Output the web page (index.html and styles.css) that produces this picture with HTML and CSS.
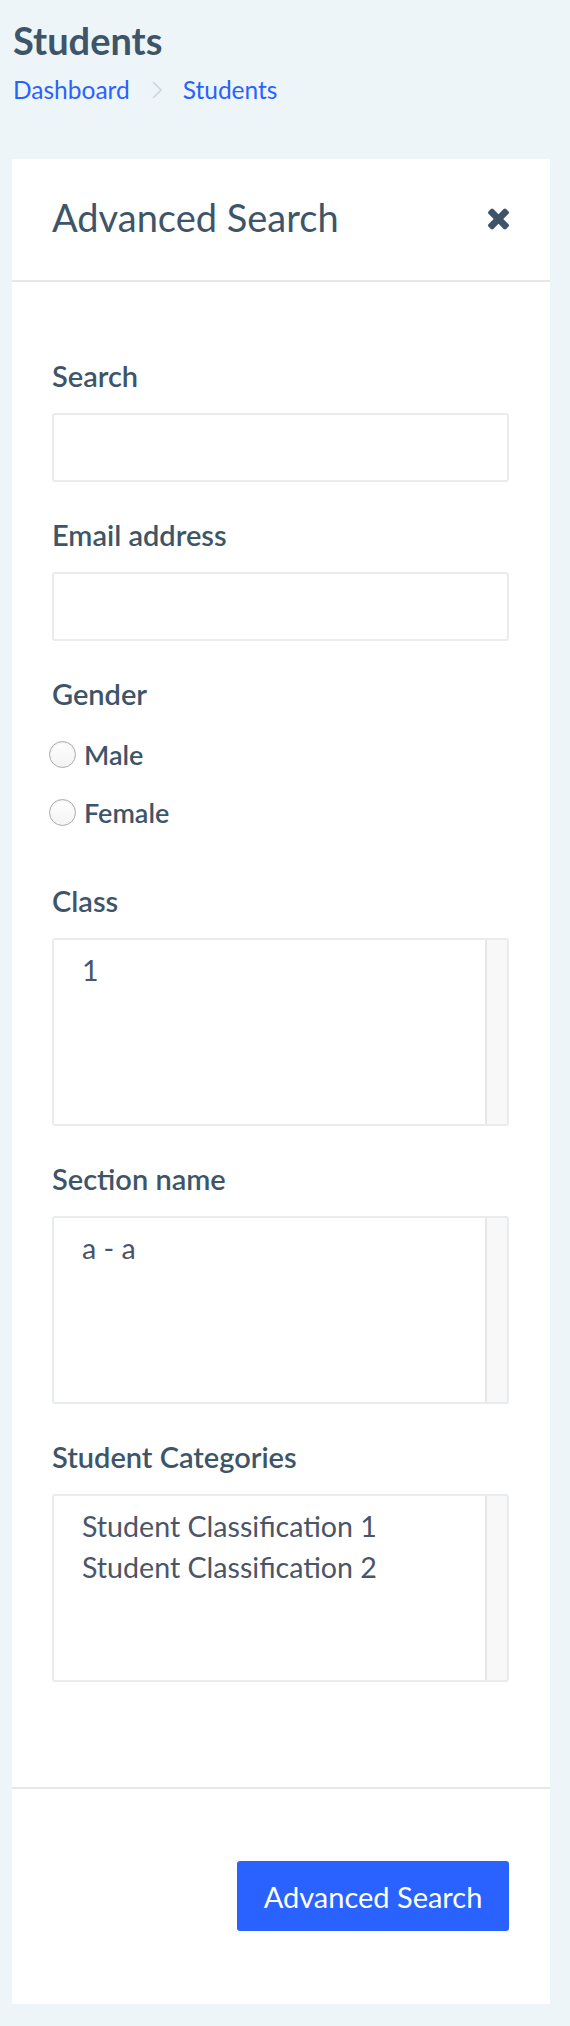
FILE: index.html
```html
<!DOCTYPE html>
<html lang="en">
<head>
<meta charset="utf-8">
<title>Students</title>
<link rel="stylesheet" href="styles.css">
</head>
<body>
<header class="page-header">
  <h1 class="page-title">Students</h1>
  <nav class="breadcrumb">
    <a href="#" class="crumb">Dashboard</a>
    <svg class="crumb-sep" width="12" height="20" viewBox="0 0 12 20"><polyline points="2,2 10,10 2,18" fill="none" stroke="#cfd4d8" stroke-width="1.6"/></svg>
    <a href="#" class="crumb">Students</a>
  </nav>
</header>

<section class="card">
  <div class="card-header">
    <h2 class="card-title">Advanced Search</h2>
    <button class="close" type="button" aria-label="Close">
      <svg width="21" height="22" viewBox="110 366 1188 1188"><path fill="#3e5569" d="M1298 1322q0 40-28 68l-136 136q-28 28-68 28t-68-28l-294-294-294 294q-28 28-68 28t-68-28l-136-136q-28-28-28-68t28-68l294-294-294-294q-28-28-28-68t28-68l136-136q28-28 68-28t68 28l294 294 294-294q28-28 68-28t68 28l136 136q28 28 28 68t-28 68l-294 294 294 294q28 28 28 68z"/></svg>
    </button>
  </div>

  <form class="card-body">
    <div class="group">
      <label class="label" for="q">Search</label>
      <input class="control" id="q" type="text">
    </div>
    <div class="group">
      <label class="label" for="email">Email address</label>
      <input class="control" id="email" type="email">
    </div>
    <div class="group group-radio">
      <div class="label">Gender</div>
      <label class="radio-row"><input type="radio" name="gender" class="radio"><span>Male</span></label>
      <label class="radio-row"><input type="radio" name="gender" class="radio"><span>Female</span></label>
    </div>
    <div class="group">
      <div class="label">Class</div>
      <div class="listbox" role="listbox">
        <div class="options"><div class="option">1</div></div>
        <div class="track"></div>
      </div>
    </div>
    <div class="group">
      <div class="label">Section name</div>
      <div class="listbox" role="listbox">
        <div class="options"><div class="option">a - a</div></div>
        <div class="track"></div>
      </div>
    </div>
    <div class="group last">
      <div class="label">Student Categories</div>
      <div class="listbox" role="listbox">
        <div class="options">
          <div class="option">Student Classification 1</div>
          <div class="option">Student Classification 2</div>
        </div>
        <div class="track"></div>
      </div>
    </div>
  </form>

  <div class="card-footer">
    <button class="btn-primary" type="button">Advanced Search</button>
  </div>
</section>
</body>
</html>
```

FILE: styles.css
```css
html, body {
  margin: 0;
  padding: 0;
}
body {
  background: #eef5f9;
  font-family: "Lato", "Open Sans", sans-serif;
  color: #3e5569;
  width: 570px;
}
.page-header {
  padding: 20px 0 0 13px;
}
.page-title {
  margin: 0;
  font-size: 38px;
  line-height: 40px;
  font-weight: 700;
  color: #3e5569;
}
.breadcrumb {
  display: flex;
  align-items: center;
  margin-top: 15px;
  height: 30px;
}
.crumb {
  font-size: 24.5px;
  line-height: 30px;
  color: #2962ff;
  text-decoration: none;
}
.crumb-sep {
  margin: 0 20px 0 21px;
}
.card {
  background: #fff;
  margin: 54px 20px 23px 12px;
}
.card-header {
  height: 121px;
  padding: 0 41px 0 40px;
  display: flex;
  align-items: center;
  justify-content: space-between;
  border-bottom: 2px solid #e6e7e8;
}
.card-title {
  margin: -5px 0 0 0;
  font-size: 38px;
  font-weight: 400;
  color: #3e5569;
}
.close {
  border: 0;
  background: none;
  padding: 0;
  display: flex;
  margin-top: -2px;
}
.card-body {
  padding: 76px 41px 70px 40px;
  margin: 0;
}
.group {
  margin-bottom: 35px;
}
.label {
  display: block;
  font-size: 29px;
  line-height: 35px;
  font-weight: 600;
  margin-bottom: 20px;
}
.control {
  display: block;
  box-sizing: border-box;
  width: 100%;
  height: 69px;
  border: 2px solid #e9ecef;
  border-radius: 3px;
  background: #fff;
  margin: 0;
}
.group-radio .label {
  margin-bottom: 14px;
}
.group-radio {
  margin-bottom: 42px;
}
.radio-row {
  display: flex;
  align-items: center;
  height: 58px;
  font-size: 27px;
  font-weight: 600;
  margin-left: -3px;
}
.radio {
  appearance: none;
  -webkit-appearance: none;
  width: 27px;
  height: 27px;
  margin: 0 8px 0 0;
  border-radius: 50%;
  border: 1.5px solid #ababab;
  background: linear-gradient(#ffffff, #f3f3f3);
  box-shadow: inset 0 1px 2px rgba(0,0,0,0.08);
  box-sizing: border-box;
}
.listbox {
  display: flex;
  height: 188px;
  box-sizing: border-box;
  border: 2px solid #e9ecef;
  border-radius: 3px;
}
.options {
  flex: 1;
  padding: 10px 0 0 28px;
}
.option {
  font-size: 28.6px;
  line-height: 41px;
  color: #4a5568;
}
.track {
  width: 20px;
  background: #f8f8f8;
  border-left: 2px solid #e6e6e6;
}
.card-footer {
  border-top: 2px solid #e6e7e8;
  padding: 72px 41px 73px 0;
  display: flex;
  justify-content: flex-end;
}
.btn-primary {
  height: 70px;
  width: 272px;
  border: 0;
  border-radius: 3px;
  background: #2962ff;
  color: #fff;
  font-family: "Lato", "Open Sans", sans-serif;
  font-size: 29px;
  padding: 0;
}
```
